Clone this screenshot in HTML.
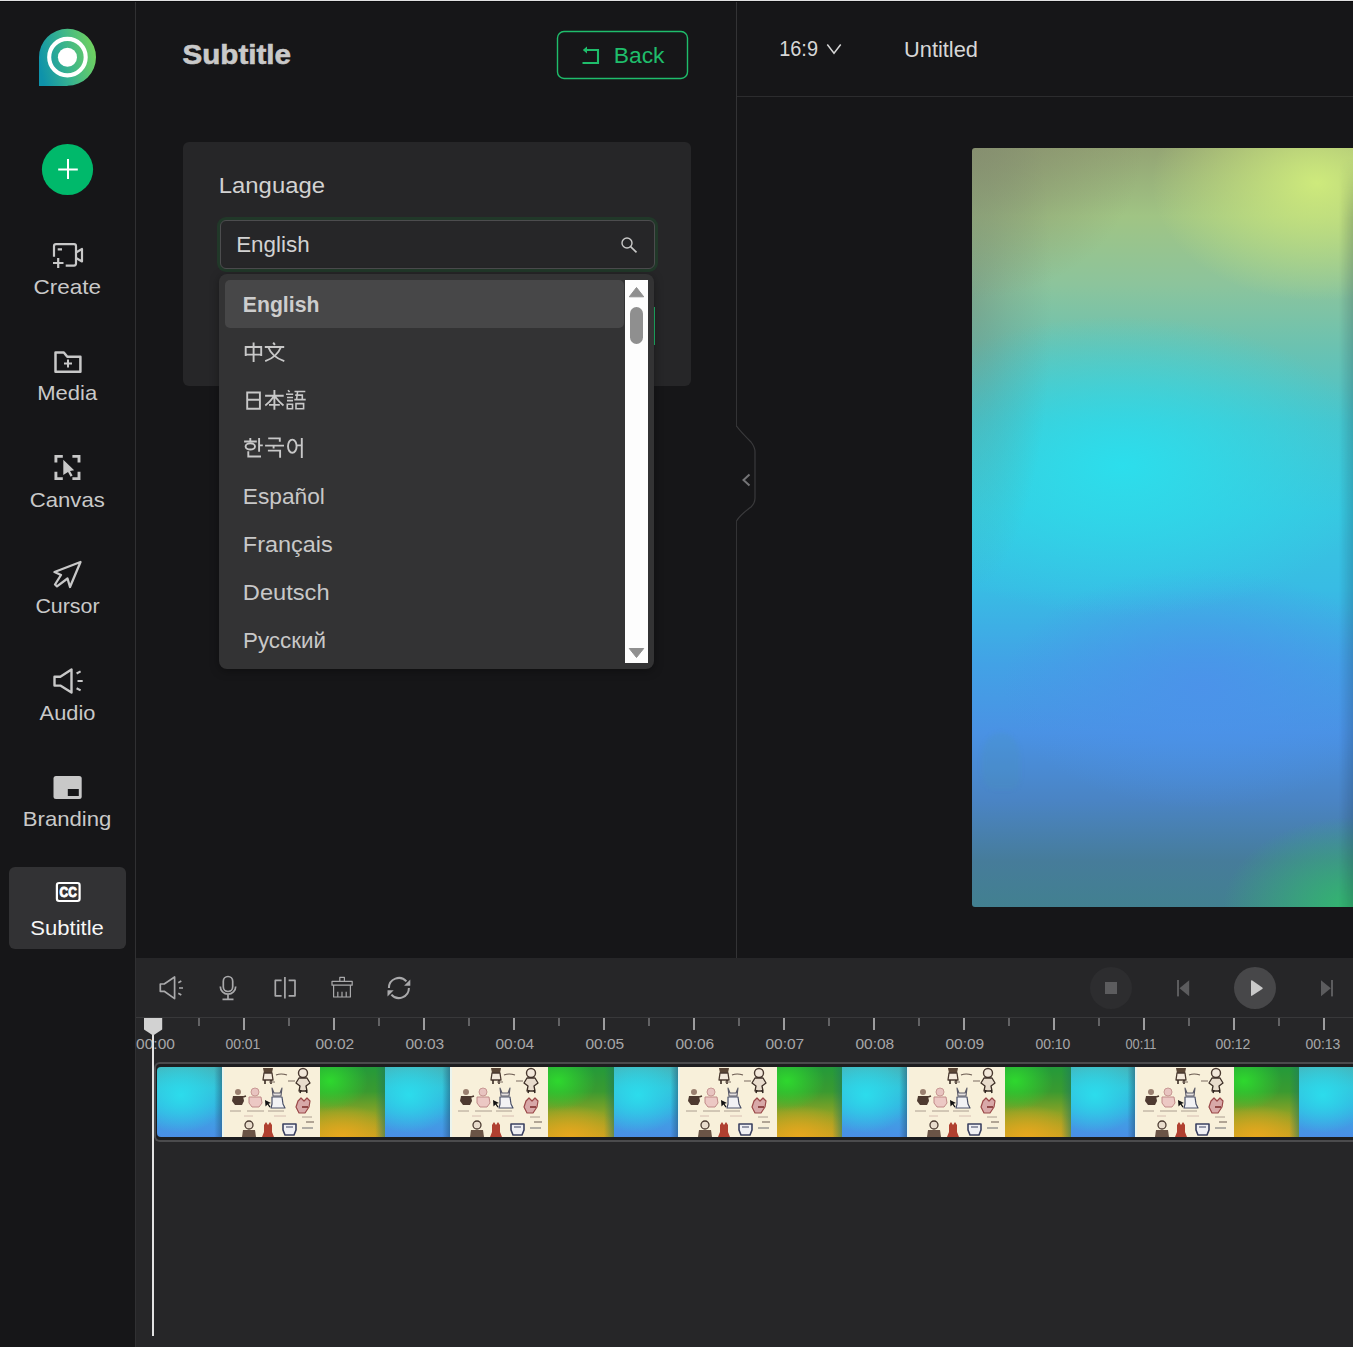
<!DOCTYPE html>
<html><head><meta charset="utf-8">
<style>
*{margin:0;padding:0;box-sizing:border-box}
html,body{width:1353px;height:1347px;overflow:hidden;background:#161618;font-family:"Liberation Sans",sans-serif}
.a{position:absolute}
.t{position:absolute;white-space:nowrap;line-height:1}
</style></head>
<body>
<!-- top line -->
<div class="a" style="left:0;top:0;width:1353px;height:1px;background:#e1e1e1"></div>
<div class="a" style="left:0;top:1px;width:1353px;height:1px;background:#0c0c0e"></div>
<!-- sidebar divider -->
<div class="a" style="left:135px;top:2px;width:1px;height:1345px;background:#303032"></div>
<!-- editor divider -->
<div class="a" style="left:736px;top:2px;width:1px;height:425px;background:#333335"></div><div class="a" style="left:736px;top:521px;width:1px;height:437px;background:#333335"></div>
<div class="a" style="left:737px;top:96px;width:616px;height:1px;background:#2c2c2e"></div>

<!-- active sidebar item -->
<div class="a" style="left:9px;top:867px;width:117px;height:82px;border-radius:6px;background:#323234"></div>

<!-- card -->
<div class="a" style="left:183px;top:142px;width:508px;height:244px;border-radius:6px;background:#262628"></div>
<!-- input -->
<div class="a" style="left:217px;top:217px;width:441px;height:55px;border-radius:9px;background:#213829"></div>
<div class="a" style="left:220px;top:220px;width:435px;height:49px;border-radius:6px;background:#262628;border:1px solid #4c4c4e"></div>
<!-- hidden green edge -->
<div class="a" style="left:654px;top:307px;width:1px;height:38px;background:#1fb86a"></div>
<!-- dropdown -->
<div class="a" style="left:219px;top:274px;width:435px;height:395px;border-radius:8px;background:#333334;box-shadow:0 2px 10px rgba(0,0,0,.35)"></div>
<div class="a" style="left:225px;top:280px;width:399px;height:48px;border-radius:5px;background:#474748"></div>
<div class="a" style="left:625px;top:280px;width:23px;height:383px;background:#fdfdfd"></div>
<div class="a" style="left:630px;top:307px;width:13px;height:37px;border-radius:6.5px;background:#8f8f8f"></div>

<!-- preview -->
<div class="a" id="pv" style="left:972px;top:148px;width:381px;height:759px;border-radius:3px 0 0 3px;overflow:hidden;
background:
radial-gradient(ellipse 170px 150px at 0px 0px, rgba(132,138,110,.75), rgba(132,138,110,0) 100%),
radial-gradient(ellipse 80px 290px at 0px 150px, rgba(110,132,118,.45) 0%, rgba(110,132,118,.2) 50%, rgba(110,132,118,0) 100%),
radial-gradient(ellipse 165px 118px at 345px 35px, rgba(206,234,124,1), rgba(206,234,124,0) 100%),
radial-gradient(ellipse 260px 150px at 150px 318px, rgba(44,222,236,1), rgba(44,222,236,0) 100%),
radial-gradient(ellipse 200px 120px at 230px 540px, rgba(76,146,234,.9), rgba(76,146,234,0) 100%),
radial-gradient(ellipse 130px 90px at 381px 759px, rgba(50,184,110,1), rgba(50,184,110,0) 100%),
linear-gradient(180deg,#94a474 0%,#a0c484 9%,#8cc49c 18%,#6cc2b0 26%,#48c4cc 36%,#38c6e0 48%,#38bce4 58%,#42a2e6 68%,#4a92e4 77%,#4a84c4 86%,#467c9a 94%,#428090 100%)">
<div style="position:absolute;right:0;top:10px;width:14px;height:749px;background:linear-gradient(90deg,rgba(0,0,0,0),rgba(20,40,60,.2));-webkit-mask-image:linear-gradient(180deg,transparent 0,#000 60px)"></div>
<div style="position:absolute;left:10px;top:585px;width:38px;height:56px;border-radius:45% 45% 20% 30%;background:rgba(70,150,175,.18);filter:blur(2px)"></div>
</div>

<!-- timeline -->
<div class="a" style="left:136px;top:958px;width:1217px;height:389px;background:#262628"></div>
<div class="a" style="left:136px;top:1017px;width:1217px;height:1px;background:#38383a"></div>


<svg class="a" style="left:0;top:0" width="1353" height="1347" viewBox="0 0 1353 1347">
<defs>
<linearGradient id="lg" x1="0" y1="0.62" x2="1" y2="0.38">
<stop offset="0" stop-color="#0e92aa"/><stop offset="0.45" stop-color="#36b290"/><stop offset="1" stop-color="#72d25e"/>
</linearGradient>
</defs>
<!-- logo -->
<path d="M39,86 L39,57.25 A28.5,28.5 0 1 1 67.5,85.75 L67.5,86 Z" fill="url(#lg)"/>
<circle cx="67.45" cy="57.15" r="18.25" fill="none" stroke="#fff" stroke-width="4.1"/>
<circle cx="67.45" cy="57.25" r="9.55" fill="#fff"/>
<!-- plus -->
<circle cx="67.5" cy="169.5" r="25.6" fill="#00b96b"/>
<path d="M58.2,169.5H77.8M68,159V179" stroke="#fff" stroke-width="2"/>

<g fill="none" stroke="#c8c8c8" stroke-width="2.2" stroke-linejoin="round">
<!-- create -->
<path d="M54,256.8V246.2a2,2 0 0 1 2,-2H74a2,2 0 0 1 2,2V263.6a2,2 0 0 1 -2,2H65.7"/>
<path d="M76,252.5L82,249V261.5L76,258" />
<path d="M57.7,249.3H62M53,263H63.5M58.2,258V268"/>
<!-- media -->
<path d="M55.5,352.5H63.8L67.3,356.8H80.4V371.8H55.5Z" stroke-width="2.5"/>
<path d="M64,363.4H72M68,359.4V367.4" stroke-width="2"/>
<!-- canvas -->
<path d="M55.9,462.5V456.4H62.8M72.4,456.4H79V462.5M55.9,471.8V478.6H62.8M72.4,478.6H79V471.8" stroke-width="2.9" stroke-linejoin="miter"/>
<path d="M63.3,459.8L74.2,470.3L70,470.9L72.6,475.6L70.6,476.8L68,472L63.3,475Z" fill="#c8c8c8" stroke="none"/>
<!-- cursor -->
<path d="M80.5,562L54.5,572L61,575L55,584.5L57,586.3L67.5,578.5L70,587Z" stroke-width="2.3"/>
<!-- audio -->
<path d="M54.5,676.8H60.3L71.5,669.5V692.5L60.3,685.6H54.5Z" stroke-width="2.4"/>
<path d="M76.6,673.5L80.6,671.4M77.5,681H82.7M76.6,688.3L80.6,690.4" stroke-width="2.2"/>
<!-- cc -->
<rect x="56.9" y="883" width="22.7" height="18" rx="2.2" stroke="#fff" stroke-width="2.2"/>
</g>
<!-- branding -->
<rect x="53.5" y="776" width="28.2" height="23" rx="2.5" fill="#c8c8c8"/>
<rect x="67.8" y="789" width="11" height="7" fill="#161618"/>
<text x="59.5" y="897.2" font-family="Liberation Sans" font-weight="bold" font-size="14.2" fill="#fff" stroke="#fff" stroke-width="0.9" textLength="17.3" lengthAdjust="spacingAndGlyphs">CC</text>

<!-- sidebar labels -->
<g font-family="Liberation Sans" font-size="20.3" fill="#c9c9c9">
<text x="33.5" y="294.3" textLength="67.6" lengthAdjust="spacingAndGlyphs">Create</text>
<text x="37.2" y="400" textLength="60" lengthAdjust="spacingAndGlyphs">Media</text>
<text x="29.8" y="507" textLength="75" lengthAdjust="spacingAndGlyphs">Canvas</text>
<text x="35.4" y="613" textLength="64.2" lengthAdjust="spacingAndGlyphs">Cursor</text>
<text x="39.6" y="719.7" textLength="55.8" lengthAdjust="spacingAndGlyphs">Audio</text>
<text x="22.8" y="826" textLength="88.6" lengthAdjust="spacingAndGlyphs">Branding</text>
<text x="30.3" y="935" textLength="73.6" lengthAdjust="spacingAndGlyphs" fill="#f7f7f7">Subtitle</text>
</g>

<!-- header -->
<text x="182.5" y="63.7" font-family="Liberation Sans" font-weight="bold" font-size="27.5" fill="#c9c9c9" stroke="#c9c9c9" stroke-width="0.6" textLength="108.5" lengthAdjust="spacingAndGlyphs">Subtitle</text>
<rect x="557.5" y="31.5" width="130" height="47" rx="6.5" fill="none" stroke="#1fbd6b" stroke-width="1.4"/>
<path d="M584.8,50H598V63H582.5" fill="none" stroke="#1fbd6b" stroke-width="2.1"/>
<path d="M582.8,50L587,46.6V53.4Z" fill="#1fbd6b"/>
<text x="613.8" y="62.9" font-family="Liberation Sans" font-size="21.8" fill="#1fbd6b" textLength="50.7" lengthAdjust="spacingAndGlyphs">Back</text>

<text x="779.2" y="56" font-family="Liberation Sans" font-size="22.5" fill="#d6d6d6" textLength="38.8" lengthAdjust="spacingAndGlyphs">16:9</text>
<path d="M827.3,44.5L834,53.3L840.7,44.5" fill="none" stroke="#d6d6d6" stroke-width="1.5"/>
<text x="904" y="56.8" font-family="Liberation Sans" font-size="21.5" fill="#d6d6d6" textLength="74" lengthAdjust="spacingAndGlyphs">Untitled</text>

<!-- card -->
<text x="218.8" y="193" font-family="Liberation Sans" font-size="21.8" fill="#d2d2d2" textLength="106.2" lengthAdjust="spacingAndGlyphs">Language</text>
<text x="236.2" y="252.1" font-family="Liberation Sans" font-size="22.3" fill="#d2d2d2" textLength="73.4" lengthAdjust="spacingAndGlyphs">English</text>
<circle cx="627" cy="243" r="5" fill="none" stroke="#c8c8c8" stroke-width="1.4"/>
<path d="M630.6,246.6L636.5,252.4" stroke="#c8c8c8" stroke-width="1.6"/>

<!-- dropdown items -->
<g font-family="Liberation Sans" font-size="22" fill="#c8c8c8">
<text x="242.8" y="312.1" font-weight="bold" font-size="22.5" textLength="76.6" lengthAdjust="spacingAndGlyphs" fill="#cdcdcd">English</text>
<text x="242.8" y="503.8" textLength="82" lengthAdjust="spacingAndGlyphs">Español</text>
<text x="242.8" y="552.3" textLength="90" lengthAdjust="spacingAndGlyphs">Français</text>
<text x="242.8" y="600" textLength="86.8" lengthAdjust="spacingAndGlyphs">Deutsch</text>
<text x="243" y="648" textLength="83" lengthAdjust="spacingAndGlyphs">Русский</text>
</g>
<g fill="none" stroke="#c8c8c8" stroke-width="1.9">
<!-- 中 -->
<path d="M245.7,356V347H261.2V356M245.7,354.6H261.2M253.6,342.4V361.9"/>
<!-- 文 -->
<path d="M273.2,342.6L274.9,344.9M264.8,347H284.2M268.2,347Q272,357 284.3,361.2M281,347Q277,357 265.2,361.2"/>
<!-- 日 -->
<path d="M247.2,409.8V392.5H259.9V409.8M247.2,399.7H259.9M247.2,408.8H259.9"/>
<!-- 本 -->
<path d="M265.1,395.8H283.7M274.4,390.1V409.8M273.8,396.5Q270,402 265.3,405.4M275,396.5Q279,402 283.5,405.4M269,404.9H279.8"/>
<!-- 語 -->
<path d="M288,390.2L289.6,392M286,394.3H293.2M287,397.5H293M287,400.6H293M287.3,409.5V404.2H292.5V408.8H287.3" stroke-width="1.6"/>
<path d="M294.5,391.5H305.3M297.6,391.5L296.6,399.5M295.2,395.1H302.3V399.5M294.3,399.6H305.7M296,409.6V403.6H303.6V409.6M296,408.8H303.6" stroke-width="1.6"/>
<!-- 한 -->
<path d="M250.3,438.1V440.7M244.1,441.5H256.8M259.1,438.1V451.8M259.1,445.4H262.8M248.3,451.3V456.5H261"/>
<ellipse cx="250.3" cy="446.4" rx="4.7" ry="3.1"/>
<!-- 국 -->
<path d="M268.2,438.4H279.8V441.8M265.1,445.6H284M273.6,445.6V448.6M267.9,450.6H280.1V457.8"/>
<!-- 어 -->
<ellipse cx="292.3" cy="446.2" rx="4.3" ry="6.6"/>
<path d="M296.6,445.4H301M301.8,437.9V458"/>
</g>
<!-- scrollbar arrows -->
<path d="M629.3,296.8L636.5,287.5L643.7,296.8Z" fill="#8f8f8f" stroke="#8f8f8f" stroke-width="1" stroke-linejoin="round"/>
<path d="M629.3,648.5L636.5,657.5L643.7,648.5Z" fill="#8f8f8f" stroke="#8f8f8f" stroke-width="1" stroke-linejoin="round"/>

<!-- collapse bump -->
<path d="M736.5,426 C740,431 747,438 751,442 C754.5,446.5 755,449 755,452 V498 C755,502 754,504 751,507 C747,510 740,515 736.5,521" fill="#161618" stroke="#3a3a3c" stroke-width="1.2"/>
<path d="M749.5,474.5L743.5,480L749.5,485.5" fill="none" stroke="#747476" stroke-width="2"/>
</svg>

<style>
.tb{top:1067px;height:70px;background:linear-gradient(90deg,rgba(30,60,90,0) 88%,rgba(30,70,100,.45) 100%),radial-gradient(ellipse 45px 38px at 24px 28px,#2cdcec 0%,rgba(44,220,236,0) 100%),linear-gradient(180deg,#44b6bc 0%,#34c0d8 30%,#34b2e0 55%,#3fa0e4 75%,#4a8ee6 100%)}
.tc{top:1067px;height:70px;background:linear-gradient(90deg,#eaf4ee 0,#eaf4ee 2px,#f8f0da 2px);overflow:hidden}
.tc svg{position:absolute;left:0;top:0}
.tg{top:1067px;height:70px;background:linear-gradient(90deg,rgba(30,110,90,0) 85%,rgba(30,120,100,.55) 100%),radial-gradient(ellipse 38px 30px at 10px 14px,#2ed82e 0%,rgba(46,216,46,0) 100%),radial-gradient(ellipse 55px 32px at 22px 70px,#e8a81e 0%,rgba(232,168,30,0) 100%),linear-gradient(180deg,#249a3a 0%,#3a9a30 35%,#88a226 65%,#c4a020 100%)}
</style>
<div class="a" style="left:154px;top:1062px;width:1210px;height:80px;border-radius:6px;background:#1d1d1f;border:2px solid #4b4b4d;border-right:none"></div>
<div class="a" style="left:157px;top:1067px;width:1196px;height:70px;border-radius:4px 0 0 4px;overflow:hidden">
<div style="position:absolute;left:-157px;top:-1067px;width:1353px;height:1347px">
<div class="a tb" style="left:157px;width:65px"></div>
<div class="a tc" style="left:222px;width:98px"><svg width="99" height="70"><use href="#sk"/></svg></div>
<div class="a tg" style="left:320px;width:65px"></div>
<div class="a tb" style="left:385px;width:65px"></div>
<div class="a tc" style="left:450px;width:98px"><svg width="99" height="70"><use href="#sk"/></svg></div>
<div class="a tg" style="left:548px;width:66px"></div>
<div class="a tb" style="left:614px;width:64px"></div>
<div class="a tc" style="left:678px;width:99px"><svg width="99" height="70"><use href="#sk"/></svg></div>
<div class="a tg" style="left:777px;width:65px"></div>
<div class="a tb" style="left:842px;width:65px"></div>
<div class="a tc" style="left:907px;width:98px"><svg width="99" height="70"><use href="#sk"/></svg></div>
<div class="a tg" style="left:1005px;width:66px"></div>
<div class="a tb" style="left:1071px;width:64px"></div>
<div class="a tc" style="left:1135px;width:99px"><svg width="99" height="70"><use href="#sk"/></svg></div>
<div class="a tg" style="left:1234px;width:65px"></div>
<div class="a tb" style="left:1299px;width:65px"></div>
<div class="a tc" style="left:1364px;width:98px"><svg width="99" height="70"><use href="#sk"/></svg></div>
<div class="a tg" style="left:1462px;width:65px"></div>
</div></div>
<svg class="a" style="left:0;top:0" width="1353" height="1347" viewBox="0 0 1353 1347">
<defs>
<symbol id="sk" viewBox="0 0 99 70">
<g stroke-linejoin="round">
<!-- top figure 1 -->
<path d="M41,1h10l-1,5h-8z" fill="#5a4636"/>
<path d="M42,6h8l1,7h-10z" fill="#f4eadc" stroke="#4a3a30" stroke-width="1.3"/>
<path d="M43,13v4M49,13v4" stroke="#3a2c24" stroke-width="1.6"/>
<path d="M54,8q5,-2 11,0" fill="none" stroke="#6a5a50" stroke-width="1.2"/>
<path d="M47,15h6" stroke="#7a6a60" stroke-width="1"/>
<!-- top figure 2 -->
<circle cx="81" cy="6" r="4.5" fill="#f2e8da" stroke="#4a3a30" stroke-width="1.4"/>
<path d="M77,11l-3,5 4,3-1,5h8l-1,-5 4,-3-3,-5z" fill="#e8dccc" stroke="#3e3028" stroke-width="1.3"/>
<path d="M79,23l-1,3M84,23l1,3" stroke="#2e241e" stroke-width="1.5"/>
<path d="M66,14h7" stroke="#7a6a60" stroke-width="1.2"/>
<!-- row2 fig1 dark -->
<circle cx="16" cy="25" r="3" fill="#9a8070"/>
<path d="M11,29h10l1,5-2,4h-7l-3,-4z" fill="#4e3a30"/>
<path d="M21,30l3,-1" stroke="#4e3a30" stroke-width="1.5"/>
<!-- pink fig -->
<circle cx="33" cy="25" r="4" fill="#e8c4c0" stroke="#c89894" stroke-width="1"/>
<path d="M27,30h12l1,6-3,4h-7l-3,-4z" fill="#ecc8c4" stroke="#c08a88" stroke-width="1"/>
<!-- cursor -->
<path d="M43,33l6,3-2.5,0.8 2,3-1,0.8-2,-3-2,1.8z" fill="#111"/>
<!-- white/blue fig -->
<path d="M50,21l2,5h6l2,-5-1,8h-8z" fill="#e6e2e0" stroke="#5a5a68" stroke-width="1.1"/>
<path d="M50,30h10l1,7 2,4h-14l1,-4z" fill="#f2f2f4" stroke="#4a5068" stroke-width="1.2"/>
<!-- red/pink fig right -->
<path d="M76,34l3,-3 3,3 3,-3 3,3-1,6-4,6h-6l-3,-6z" fill="#d8a8a8" stroke="#9a4848" stroke-width="1.2"/>
<path d="M80,40h6" stroke="#7a2828" stroke-width="1.5"/>
<!-- labels -->
<path d="M8,44h11M25,44h17M46,44h16M80,50h10" stroke="#8a7a70" stroke-width="1" opacity=".7"/>
<path d="M22,49h9M52,49h12" stroke="#c8a8a0" stroke-width="1" opacity=".7"/>
<!-- bottom row -->
<circle cx="27" cy="58" r="4" fill="#e8dccc" stroke="#4a3a30" stroke-width="1.3"/>
<path d="M21,63h12l1,7h-14z" fill="#6a5446"/>
<path d="M42,58l2,-3 2,3 2,-3 2,3v7l2,5h-12l2,-5z" fill="#b04030"/>
<path d="M61,57h13v6l-2,5h-9l-2,-5z" fill="#f0f0f4" stroke="#3a4060" stroke-width="1.6"/>
<path d="M64,60h7" stroke="#3a4060" stroke-width="1.2"/>
<path d="M80,61h11" stroke="#6a6a70" stroke-width="1.2"/>
<path d="M84,55h8" stroke="#6a5a50" stroke-width="1"/>
</g>
</symbol>
</defs>
<!-- toolbar icons -->
<g fill="none" stroke="#a9a9ab" stroke-width="1.7" stroke-linejoin="round">
<path d="M160.3,984H164.2L174.6,977V998.6L164.2,991.3H160.3Z"/>
<path d="M178.3,982.8L181.3,981M179,988H183M178.3,993.2L181.3,995"/>
<rect x="223.3" y="976.5" width="9.4" height="15" rx="4.7"/>
<path d="M220.3,986.5A7.7,7.7 0 0 0 235.7,986.5M228,994.3V999.3M222.5,999.3H233.5"/>
<path d="M281.6,980.4H275.3V995.8H281.6M288.6,980.4H295V995.8H288.6M284.9,977V998.5"/>
<path d="M339.8,981.3V977.3H344.4V981.3M332,981.3H352.2V985.2H332ZM333.6,985.2V997H350.4V985.2M337.8,997V991.8M342,997V991.8M346.2,997V991.8" stroke-width="1.2"/>
<path d="M388.9,988A10,10 0 0 1 406.4,981.4M408.9,988A10,10 0 0 1 391.4,994.6" stroke-width="2"/>
</g>
<path d="M410.3,979.6V985.8H404.1Z" fill="#a9a9ab"/>
<path d="M387.5,996.4V990.2H393.7Z" fill="#a9a9ab"/>
<!-- playback controls -->
<circle cx="1111" cy="988" r="21" fill="#2d2d2f"/>
<rect x="1105" y="982" width="12" height="12" fill="#5c5c5e"/>
<rect x="1177" y="980" width="2" height="16.4" fill="#5c5c5e"/>
<path d="M1189.2,980.2V996.2L1179.5,988.2Z" fill="#5c5c5e"/>
<circle cx="1255" cy="988" r="21" fill="#474749"/>
<path d="M1252.3,980.5Q1251,979.8 1251,981.3V994.9Q1251,996.4 1252.3,995.6L1262.3,989Q1263.3,988.2 1262.3,987.4Z" fill="#c9c9c9"/>
<path d="M1321,980.2V996.2L1330.8,988.2Z" fill="#5c5c5e"/>
<rect x="1331" y="980" width="2" height="16.4" fill="#5c5c5e"/>
<!-- ruler -->
<rect x="153" y="1018" width="2" height="12" fill="#9c9c9e"/>
<rect x="198" y="1018" width="2" height="8" fill="#636365"/>
<rect x="243" y="1018" width="2" height="12" fill="#9c9c9e"/>
<rect x="288" y="1018" width="2" height="8" fill="#636365"/>
<rect x="333" y="1018" width="2" height="12" fill="#9c9c9e"/>
<rect x="378" y="1018" width="2" height="8" fill="#636365"/>
<rect x="423" y="1018" width="2" height="12" fill="#9c9c9e"/>
<rect x="468" y="1018" width="2" height="8" fill="#636365"/>
<rect x="513" y="1018" width="2" height="12" fill="#9c9c9e"/>
<rect x="558" y="1018" width="2" height="8" fill="#636365"/>
<rect x="603" y="1018" width="2" height="12" fill="#9c9c9e"/>
<rect x="648" y="1018" width="2" height="8" fill="#636365"/>
<rect x="693" y="1018" width="2" height="12" fill="#9c9c9e"/>
<rect x="738" y="1018" width="2" height="8" fill="#636365"/>
<rect x="783" y="1018" width="2" height="12" fill="#9c9c9e"/>
<rect x="828" y="1018" width="2" height="8" fill="#636365"/>
<rect x="873" y="1018" width="2" height="12" fill="#9c9c9e"/>
<rect x="918" y="1018" width="2" height="8" fill="#636365"/>
<rect x="963" y="1018" width="2" height="12" fill="#9c9c9e"/>
<rect x="1008" y="1018" width="2" height="8" fill="#636365"/>
<rect x="1053" y="1018" width="2" height="12" fill="#9c9c9e"/>
<rect x="1098" y="1018" width="2" height="8" fill="#636365"/>
<rect x="1143" y="1018" width="2" height="12" fill="#9c9c9e"/>
<rect x="1188" y="1018" width="2" height="8" fill="#636365"/>
<rect x="1233" y="1018" width="2" height="12" fill="#9c9c9e"/>
<rect x="1278" y="1018" width="2" height="8" fill="#636365"/>
<rect x="1323" y="1018" width="2" height="12" fill="#9c9c9e"/>
<g font-family="Liberation Sans" font-size="15.4" fill="#a6a6a8">
<text x="136.1" y="1049" textLength="38.8" lengthAdjust="spacingAndGlyphs">00:00</text>
<text x="225.4" y="1049" textLength="35.0" lengthAdjust="spacingAndGlyphs">00:01</text>
<text x="315.4" y="1049" textLength="38.8" lengthAdjust="spacingAndGlyphs">00:02</text>
<text x="405.4" y="1049" textLength="38.8" lengthAdjust="spacingAndGlyphs">00:03</text>
<text x="495.4" y="1049" textLength="38.8" lengthAdjust="spacingAndGlyphs">00:04</text>
<text x="585.4" y="1049" textLength="38.8" lengthAdjust="spacingAndGlyphs">00:05</text>
<text x="675.4" y="1049" textLength="38.8" lengthAdjust="spacingAndGlyphs">00:06</text>
<text x="765.4" y="1049" textLength="38.8" lengthAdjust="spacingAndGlyphs">00:07</text>
<text x="855.4" y="1049" textLength="38.8" lengthAdjust="spacingAndGlyphs">00:08</text>
<text x="945.4" y="1049" textLength="38.8" lengthAdjust="spacingAndGlyphs">00:09</text>
<text x="1035.4" y="1049" textLength="35.0" lengthAdjust="spacingAndGlyphs">00:10</text>
<text x="1125.4" y="1049" textLength="31.1" lengthAdjust="spacingAndGlyphs">00:11</text>
<text x="1215.4" y="1049" textLength="35.0" lengthAdjust="spacingAndGlyphs">00:12</text>
<text x="1305.4" y="1049" textLength="35.0" lengthAdjust="spacingAndGlyphs">00:13</text>
</g>
<!-- playhead -->
<rect x="152" y="1030" width="2" height="306" fill="#e2e2e2"/>
<path d="M144,1018H162.2V1029.4L153.1,1035.4L144,1029.4Z" fill="#d2d2d2"/>
</svg>
</body></html>
